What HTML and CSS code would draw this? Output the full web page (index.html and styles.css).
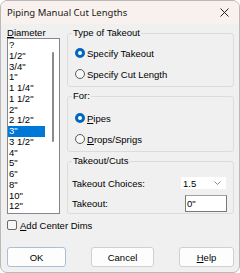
FILE: index.html
```html
<!DOCTYPE html>
<html>
<head>
<meta charset="utf-8">
<link rel="stylesheet" href="styles.css">
</head>
<body>
<div class="window">
  <div class="titlebar">
    <span class="title">Piping Manual Cut Lengths</span>
    <svg class="close" width="9" height="9" viewBox="0 0 9 9"><path d="M0.5 0.5 L8.5 8.5 M8.5 0.5 L0.5 8.5" stroke="#222" stroke-width="1" fill="none"/></svg>
  </div>
  <div class="main">
    <div class="left">
      <div class="label"><u>D</u>iameter</div>
      <div class="listbox">
        <div class="items">
          <div class="item">?</div>
          <div class="item">1/2"</div>
          <div class="item">3/4"</div>
          <div class="item">1"</div>
          <div class="item">1 1/4"</div>
          <div class="item">1 1/2"</div>
          <div class="item">2"</div>
          <div class="item">2 1/2"</div>
          <div class="item selected">3"</div>
          <div class="item">3 1/2"</div>
          <div class="item">4"</div>
          <div class="item">5"</div>
          <div class="item">6"</div>
          <div class="item">8"</div>
          <div class="item">10"</div>
          <div class="item">12"</div>
        </div>
        <div class="scroll"><div class="thumb"></div></div>
      </div>
    </div>
    <div class="right">
      <div class="group g1">
        <div class="legend">Type of Takeout</div>
        <div class="radio-row r-first"><span class="radio on"></span>Specify Takeout</div>
        <div class="radio-row"><span class="radio"></span>Specify Cut Length</div>
      </div>
      <div class="group g2">
        <div class="legend">For:</div>
        <div class="radio-row r-first2"><span class="radio on"></span><span><u>P</u>ipes</span></div>
        <div class="radio-row"><span class="radio"></span><span><u>D</u>rops/Sprigs</span></div>
      </div>
      <div class="group g3">
        <div class="legend">Takeout/Cuts</div>
        <div class="field-row fr1"><span>Takeout Choices:</span><div class="combo"><span>1.5</span><svg width="7" height="4" viewBox="0 0 7 4"><path d="M0.5 0.5 L3.5 3.5 L6.5 0.5" stroke="#888" fill="none"/></svg></div></div>
        <div class="field-row fr2"><span>Takeout:</span><div class="input">0"</div></div>
      </div>
    </div>
  </div>
  <div class="check-row"><span class="checkbox"></span><span><u>A</u>dd Center Dims</span></div>
  <div class="buttons">
    <div class="btn default">OK</div>
    <div class="btn">Cancel</div>
    <div class="btn"><u>H</u>elp</div>
  </div>
</div>
</body>
</html>
```
FILE: styles.css
```css
html, body {
  margin: 0;
  padding: 0;
  background: #ffffff;
}
.window {
  width: 240px;
  height: 273px;
  box-sizing: border-box;
  border: 1px solid #b9b9b9;
  border-radius: 7px;
  background: #f0f0f0;
  overflow: hidden;
  font-family: "Liberation Sans", Arial, sans-serif;
  font-size: 9.5px;
  color: #000;
  display: flex;
  flex-direction: column;
}
.titlebar {
  height: 23px;
  background: #f9f1ed;
  display: flex;
  align-items: center;
  justify-content: space-between;
  padding: 0 10px 0 6px;
  flex: none;
}
.title {
  font-family: "Noto Sans", sans-serif;
  font-size: 9.5px;
  color: #1a1a1a;
}
.main {
  display: flex;
  padding: 0 5px 0 6px;
  gap: 7px;
}
.left {
  width: 53px;
  display: flex;
  flex-direction: column;
  padding-top: 4px;
}
.label {
  height: 10px;
  line-height: 10px;
}
.listbox {
  height: 176px;
  box-sizing: border-box;
  border: 1px solid #828790;
  background: #fff;
  display: flex;
  padding: 1px 0 0 0;
}
.items {
  flex: 1;
}
.item {
  height: 10.75px;
  line-height: 10.75px;
  padding-left: 1px;
  margin-right: 1px;
}
.item.selected {
  background: #0078d7;
  color: #fff;
}
.scroll {
  width: 13px;
  display: flex;
  justify-content: center;
  padding-top: 12px;
}
.thumb {
  width: 2px;
  height: 90px;
  background: #8a8a8a;
  border-radius: 1px;
}
.right {
  flex: 1;
  display: flex;
  flex-direction: column;
  padding-top: 9px;
}
.group {
  border: 1px solid #dcdcdc;
  border-radius: 3px;
  box-sizing: border-box;
  padding: 0 4px;
}
.g1 { height: 54px; }
.g2 { height: 56px; margin-top: 9px; }
.g3 { height: 53px; margin-top: 9px; }
.legend {
  margin-top: -6px;
  height: 10px;
  line-height: 10px;
  width: fit-content;
  background: #f0f0f0;
  padding: 0 1px;
}
.radio-row {
  display: flex;
  align-items: center;
  height: 12px;
  margin-top: 9px;
  gap: 2px;
  padding-left: 3px;
}
.r-first { margin-top: 9px; }
.r-first2 { margin-top: 11px; }
.radio {
  width: 10px;
  height: 10px;
  box-sizing: border-box;
  border: 1px solid #5a5a5a;
  border-radius: 50%;
  background: #f7f7f7;
}
.radio.on {
  border: 3px solid #0067c0;
  background: #fff;
}
.field-row {
  display: flex;
  align-items: center;
  justify-content: space-between;
}
.fr1 { height: 12px; margin-top: 11px; padding-right: 3px; }
.fr2 { height: 17px; margin-top: 6px; padding-right: 2px; }
.combo {
  width: 45px;
  height: 12px;
  background: #fff;
  display: flex;
  align-items: center;
  justify-content: space-between;
  padding: 0 5px 0 2px;
  box-sizing: border-box;
}
.input {
  width: 42px;
  height: 17px;
  box-sizing: border-box;
  background: #fff;
  border: 1px solid #7a7a7a;
  border-top-color: #a0a0a0;
  line-height: 15px;
  padding-left: 1px;
}
.check-row {
  display: flex;
  align-items: center;
  gap: 3px;
  padding-left: 6px;
  margin-top: 6px;
  height: 10px;
}
.checkbox {
  width: 10px;
  height: 10px;
  box-sizing: border-box;
  border: 1px solid #6a6a6a;
  border-radius: 2px;
  background: #f7f7f7;
}
.buttons {
  display: flex;
  justify-content: space-between;
  padding: 0 5px 0 6px;
  margin-top: 17px;
}
.btn {
  height: 20px;
  box-sizing: border-box;
  border: 1px solid #d0d0d0;
  border-radius: 3px;
  background: #fdfdfd;
  display: flex;
  align-items: center;
  justify-content: center;
  width: 63px;
}
.btn.default {
  width: 59px;
  border-color: #a9bfd6;
}
.buttons .btn:nth-child(3) {
  width: 55px;
}
```
